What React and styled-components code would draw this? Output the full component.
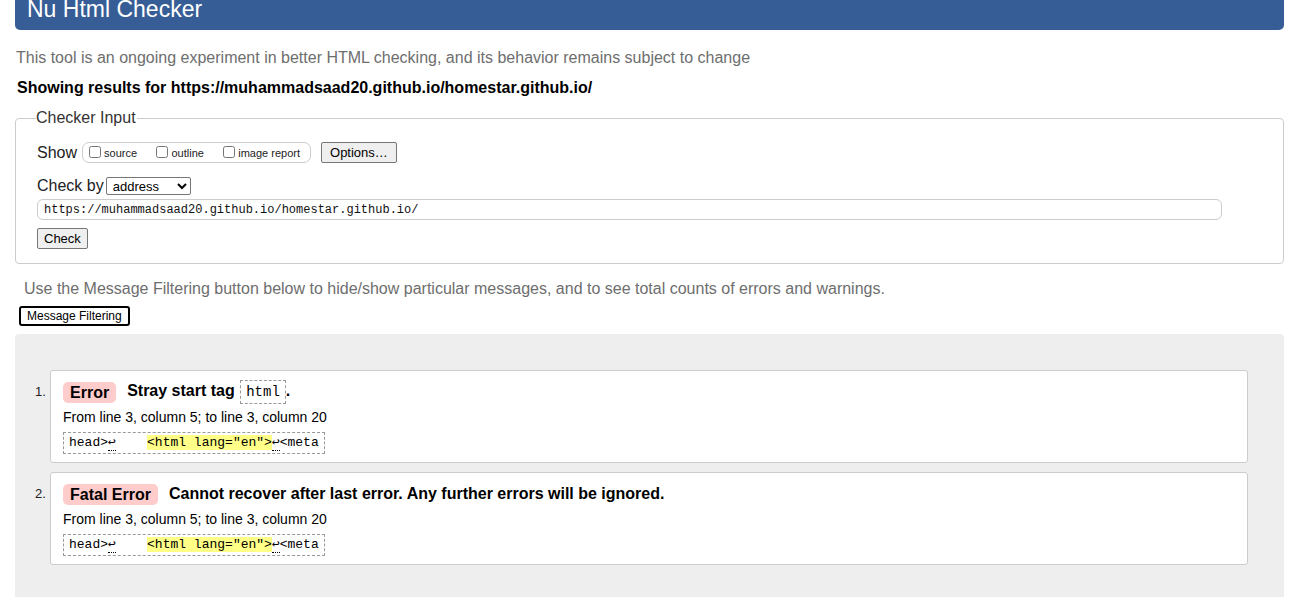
import React from "react";
import styled, { createGlobalStyle } from "styled-components";

const GlobalStyle = createGlobalStyle`
  html, body {
    margin: 0;
    padding: 0;
    background: #fff;
    font-family: "Liberation Sans", Arial, sans-serif;
    color: #000;
  }
`;

const messages = [
  { kind: "Error", text: "Stray start tag ", code: "html", tail: "." },
  { kind: "Fatal Error", text: "Cannot recover after last error. Any further errors will be ignored." },
];

function App() {
  return (
    <>
      <GlobalStyle />
      <Page>
        <Header>
          <h1>Nu Html Checker</h1>
        </Header>
        <Intro>
          This tool is an ongoing experiment in better HTML checking, and its behavior remains
          subject to change
        </Intro>
        <Results>Showing results for https://muhammadsaad20.github.io/homestar.github.io/</Results>

        <Fieldset>
          <Legend>Checker Input</Legend>
          <Row>
            <Label>Show</Label>
            <CheckGroup>
              <CheckItem>
                <Box type="checkbox" />
                source
              </CheckItem>
              <CheckItem>
                <Box type="checkbox" />
                outline
              </CheckItem>
              <CheckItem>
                <Box type="checkbox" />
                image report
              </CheckItem>
            </CheckGroup>
            <Button $wide>Options…</Button>
          </Row>
          <Row $top={14}>
            <Label>Check by</Label>
            <Select defaultValue="address">
              <option value="address">address</option>
            </Select>
          </Row>
          <UrlInput readOnly value="https://muhammadsaad20.github.io/homestar.github.io/" />
          <Button>Check</Button>
        </Fieldset>

        <Hint>
          Use the Message Filtering button below to hide/show particular messages, and to see
          total counts of errors and warnings.
        </Hint>
        <FilterButton>Message Filtering</FilterButton>

        <Panel>
          <List>
            {messages.map((m, i) => (
              <Item key={i}>
                <Num>{i + 1}.</Num>
                <Card>
                  <Title>
                    <Badge>{m.kind}</Badge>
                    <span>
                      {m.text}
                      {m.code && <Code>{m.code}</Code>}
                      {m.tail}
                    </span>
                  </Title>
                  <Location>From line 3, column 5; to line 3, column 20</Location>
                  <Extract>
                    head&gt;<Lf>↩</Lf>
                    {"    "}
                    <Mark>&lt;html lang="en"&gt;</Mark>
                    <Lf>↩</Lf>&lt;meta
                  </Extract>
                </Card>
              </Item>
            ))}
          </List>
        </Panel>
      </Page>
    </>
  );
}

export default App;

const Page = styled.div`
  width: 1269px;
  margin-left: 15px;
`;

const Header = styled.header`
  height: 30px;
  overflow: hidden;
  background: #365d95;
  border-radius: 0 0 5px 5px;
  padding-left: 12px;

  h1 {
    margin: -2px 0 0;
    font-size: 23px;
    line-height: 23px;
    font-weight: normal;
    color: #fff;
  }
`;

const Intro = styled.p`
  margin: 19px 0 0 1px;
  font-size: 16px;
  line-height: 18px;
  color: #6e6e6e;
`;

const Results = styled.p`
  margin: 12px 0 0 2px;
  font-size: 16px;
  line-height: 18px;
  font-weight: bold;
`;

const Fieldset = styled.fieldset`
  margin: 12px 0 0;
  padding: 15px 20px 14px 21px;
  border: 1px solid #ccc;
  border-radius: 4px;
  min-width: 0;
`;

const Legend = styled.legend`
  margin-left: -1px;
  padding: 0 1px 0 0;
  font-size: 16px;
  color: #333;
`;

const Row = styled.div`
  display: flex;
  align-items: center;
  margin-top: ${(p) => (p.$top ? p.$top : 0)}px;
`;

const Label = styled.span`
  font-size: 16px;
  color: #222;
  margin-right: 5px;
`;

const CheckGroup = styled.span`
  display: inline-flex;
  align-items: center;
  height: 19px;
  padding: 0 4px 0 6px;
  border: 1px solid #ccc;
  border-radius: 7px;
  margin-right: 10px;
  width: 217px;
  justify-content: space-between;
`;

const CheckItem = styled.label`
  display: inline-flex;
  align-items: center;
  font-size: 11px;
  color: #222;
  padding-right: 6px;
`;

const Box = styled.input`
  width: 12px;
  height: 12px;
  margin: 0 3px 2px 0;
`;

const Button = styled.button`
  font-family: "Liberation Sans", Arial, sans-serif;
  font-size: 13px;
  height: 21px;
  padding: 0 ${(p) => (p.$wide ? 8 : 6)}px;
  background: #efefef;
  color: #000;
  border: 1px solid #767676;
  border-radius: 2px;
  margin-top: ${(p) => (p.$wide ? 0 : 8)}px;
`;

const Select = styled.select`
  font-family: "Liberation Sans", Arial, sans-serif;
  font-size: 13px;
  width: 85px;
  height: 18px;
  padding: 0 2px;
  border: 1px solid #767676;
  border-radius: 2px;
  background: #fff;
  margin-left: -3px;
`;

const UrlInput = styled.input`
  display: block;
  box-sizing: border-box;
  width: 1185px;
  height: 21px;
  margin-top: 4px;
  padding: 0 6px;
  font-family: "Liberation Mono", "DejaVu Sans Mono", monospace;
  font-size: 12px;
  color: #111;
  border: 1px solid #ccc;
  border-radius: 6px;
  outline: none;
`;

const Hint = styled.p`
  margin: 16px 0 0 9px;
  font-size: 16px;
  line-height: 18px;
  color: #6e6e6e;
`;

const FilterButton = styled.button`
  display: block;
  margin: 8px 0 0 4px;
  height: 20px;
  padding: 0 6px;
  font-family: "Liberation Sans", Arial, sans-serif;
  font-size: 12px;
  color: #000;
  background: #fff;
  border: 2px solid #000;
  border-radius: 3px;
`;

const Panel = styled.div`
  margin-top: 8px;
  background: #eee;
  border-radius: 4px;
  padding: 36px 36px 40px 35px;
`;

const List = styled.ol`
  list-style: none;
  margin: 0;
  padding: 0;
  display: flex;
  flex-direction: column;
  gap: 9px;
`;

const Item = styled.li`
  position: relative;
`;

const Num = styled.span`
  position: absolute;
  left: -15px;
  top: 14px;
  font-size: 13px;
  color: #222;
`;

const Card = styled.div`
  background: #fff;
  border: 1px solid #ccc;
  border-radius: 3px;
  padding: 7px 12px 8px;
`;

const Title = styled.div`
  display: flex;
  align-items: center;
  gap: 11px;
  font-size: 16px;
  font-weight: bold;
  height: 28px;
`;

const Badge = styled.span`
  display: inline-block;
  background: #fcc;
  border-radius: 5px;
  padding: 0 7px;
  line-height: 21px;
`;

const Code = styled.code`
  display: inline-block;
  font-family: "Liberation Mono", "DejaVu Sans Mono", monospace;
  font-weight: normal;
  font-size: 14px;
  line-height: 22px;
  padding: 0 5px;
  border: 1px dashed #999;
  margin-left: 1px;
`;

const Location = styled.p`
  margin: 3px 0 0;
  font-size: 14px;
  line-height: 16px;
`;

const Extract = styled.code`
  display: inline-block;
  margin-top: 7px;
  padding: 0 5px;
  line-height: 20px;
  font-family: "Liberation Mono", "DejaVu Sans Mono", monospace;
  font-size: 13px;
  border: 1px dashed #999;
  white-space: pre;
`;

const Lf = styled.b`
  font-weight: normal;
  border-bottom: 1px dotted #000;
  line-height: 14px;
  display: inline-block;
`;

const Mark = styled.mark`
  background: #ff8;
  color: #000;
`;
